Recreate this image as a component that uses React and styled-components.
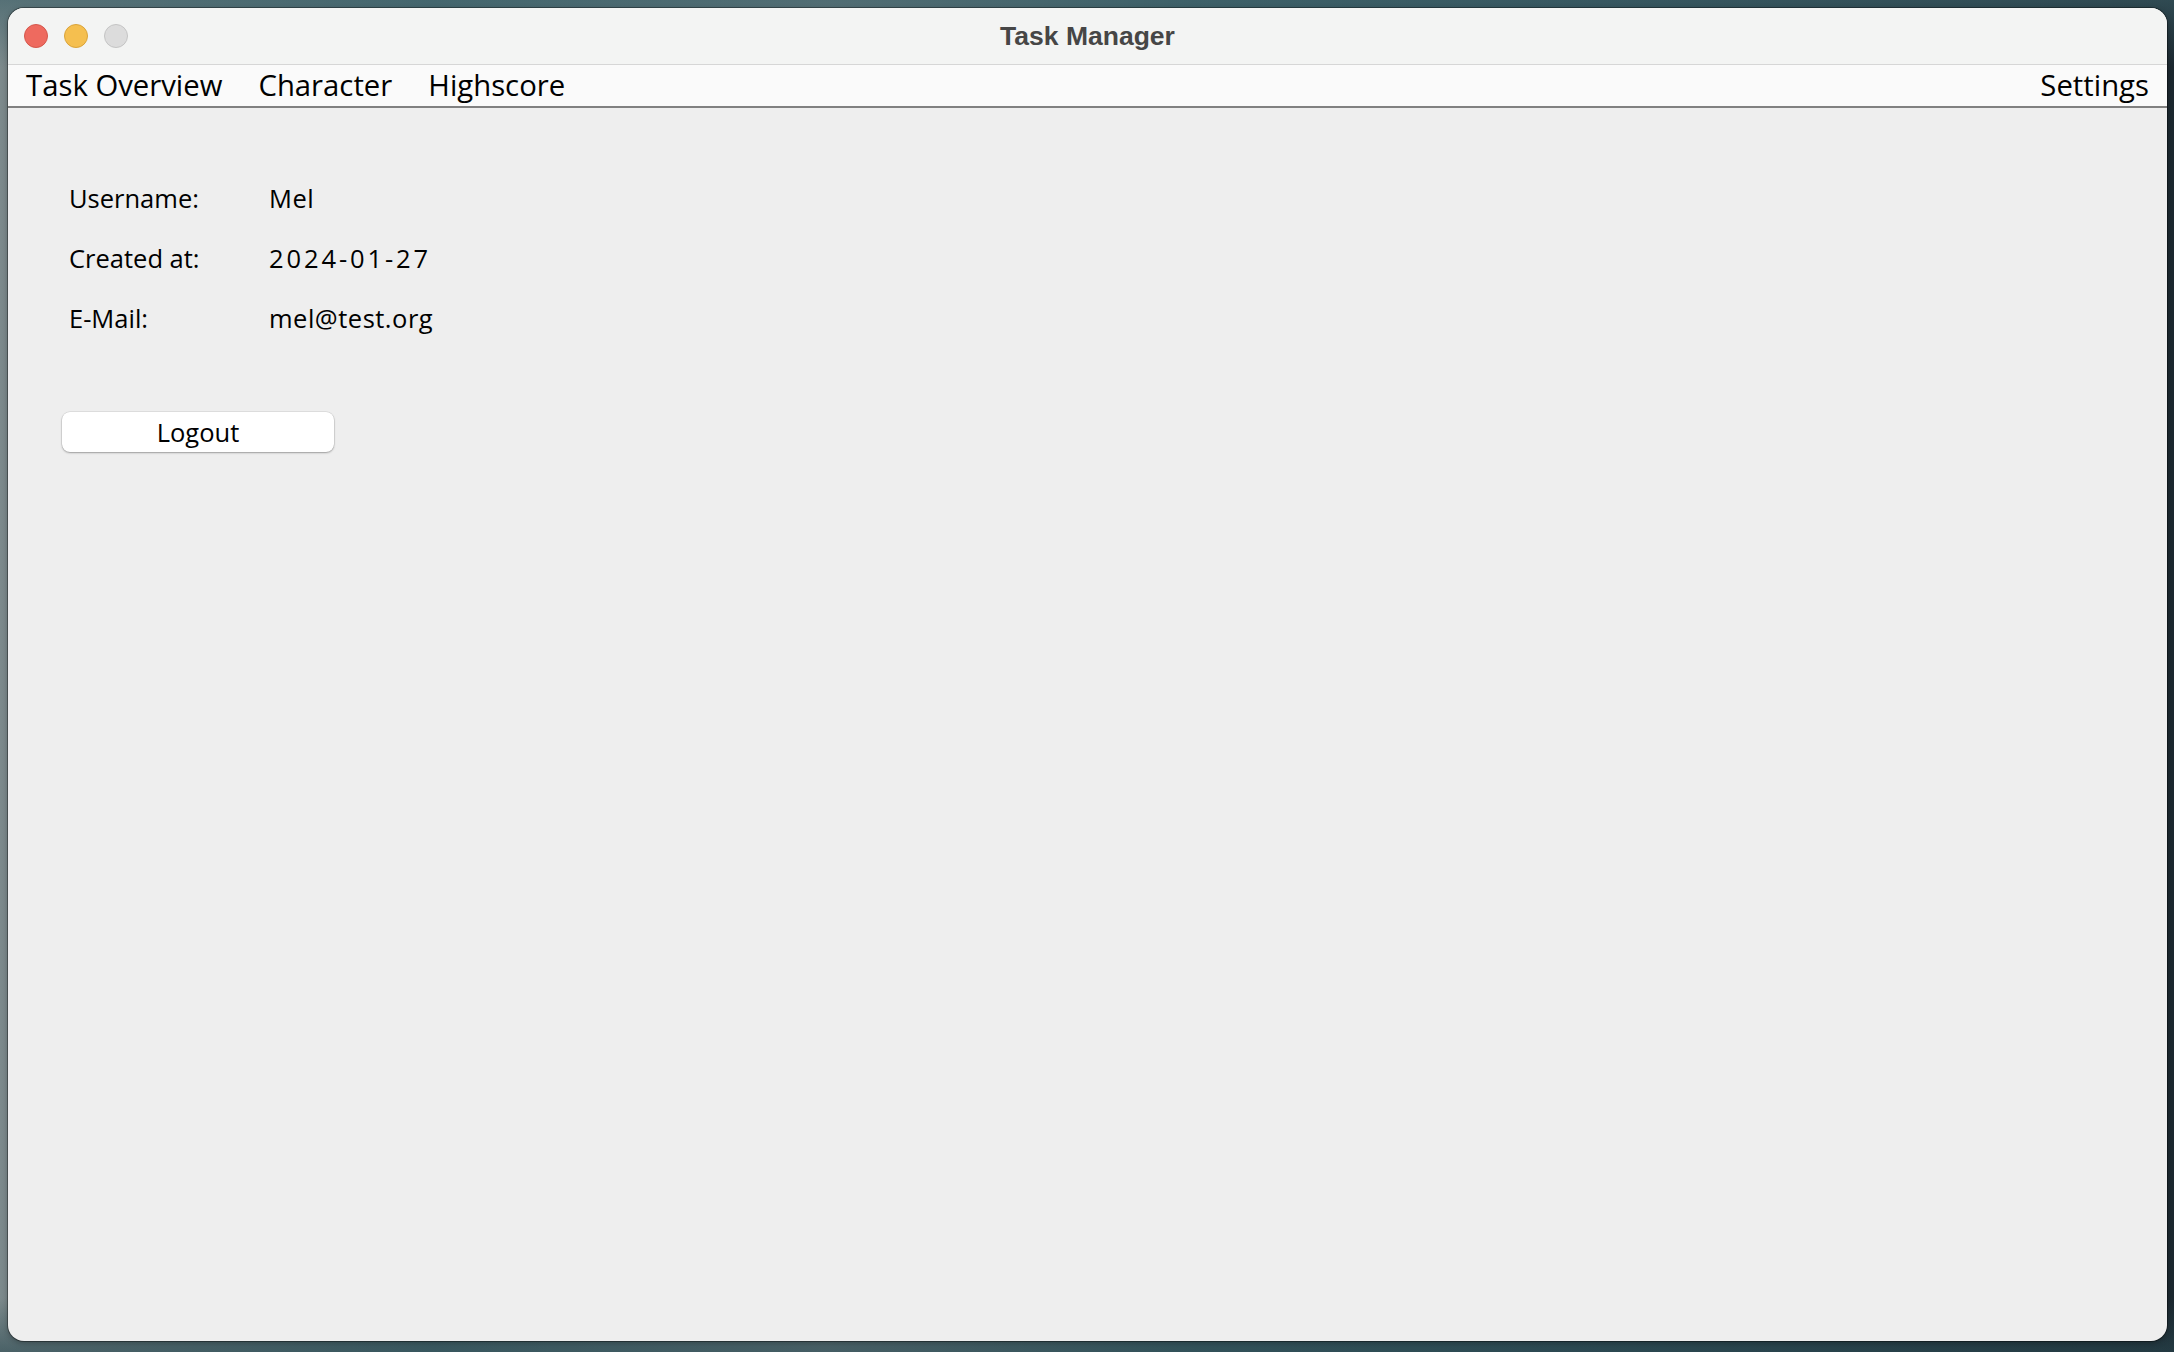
import React from "react";
import styled, { createGlobalStyle } from "styled-components";

const GlobalStyle = createGlobalStyle`
	html, body {
		margin: 0;
		padding: 0;
	}
	body {
		font-family: "Open Sans", "DejaVu Sans", sans-serif;
		color: #000;
	}
`;

const profile = [
	{ label: "Username:", value: "Mel" },
	{ label: "Created at:", value: "2024-01-27", wide: true },
	{ label: "E-Mail:", value: "mel@test.org" },
];

const menus = ["Task Overview", "Character", "Highscore"];

const App = () => {
	return (
		<Desktop>
			<GlobalStyle />
			<Window>
				<TitleBar>
					<Lights>
						<Light color="#ee6a5f" border="#d4574c" />
						<Light color="#f5bf4f" border="#d9a33a" />
						<Light color="#dcdcdc" border="#c4c4c4" />
					</Lights>
					<Title>Task Manager</Title>
				</TitleBar>
				<MenuBar>
					{menus.map((m) => (
						<MenuItem key={m}>{m}</MenuItem>
					))}
					<MenuItem $right>Settings</MenuItem>
				</MenuBar>
				<Content>
					<InfoGrid>
						{profile.map((row) => (
							<React.Fragment key={row.label}>
								<InfoLabel>{row.label}</InfoLabel>
								<InfoValue $wide={row.wide}>{row.value}</InfoValue>
							</React.Fragment>
						))}
					</InfoGrid>
					<LogoutButton type="button">Logout</LogoutButton>
				</Content>
			</Window>
		</Desktop>
	);
};

const Desktop = styled.div`
	box-sizing: border-box;
	width: 2174px;
	height: 1352px;
	padding: 8px 7px 11px 8px;
	background:
		linear-gradient(180deg, rgba(60, 96, 104, 0.6) 0%, rgba(0, 0, 0, 0) 5%),
		linear-gradient(0deg, rgba(40, 70, 78, 0.6) 0%, rgba(0, 0, 0, 0) 4%),
		linear-gradient(90deg, #7d8a8c 0%, #4f6f76 20%, #6f8084 38%, #3f6169 55%, #2f4a54 75%, #1c2830 100%);
	overflow: hidden;
`;

const Window = styled.div`
	display: flex;
	flex-direction: column;
	height: 100%;
	border-radius: 16px;
	overflow: hidden;
	background: #eeeeee;
	box-shadow: 0 0 0 1px rgba(0, 0, 0, 0.35), 0 2px 6px rgba(0, 0, 0, 0.3);
`;

const TitleBar = styled.div`
	position: relative;
	display: flex;
	align-items: center;
	justify-content: center;
	height: 56px;
	flex-shrink: 0;
	background: #f3f4f3;
	border-bottom: 1px solid #d6d6d6;
`;

const Lights = styled.div`
	position: absolute;
	left: 16px;
	top: 0;
	bottom: 0;
	display: flex;
	align-items: center;
	gap: 16px;
`;

const Light = styled.span`
	display: block;
	box-sizing: border-box;
	width: 24px;
	height: 24px;
	border-radius: 50%;
	background: ${(p) => p.color};
	border: 1px solid ${(p) => p.border};
`;

const Title = styled.div`
	font-family: "Liberation Sans", Arial, sans-serif;
	font-weight: 700;
	font-size: 26.5px;
	color: #464646;
`;

const MenuBar = styled.div`
	display: flex;
	align-items: center;
	gap: 36px;
	height: 41px;
	flex-shrink: 0;
	padding: 0 18px 0 18px;
	background: #fafafa;
	border-bottom: 2px solid #808080;
`;

const MenuItem = styled.div`
	font-size: 29.3px;
	line-height: 41px;
	margin-left: ${(p) => (p.$right ? "auto" : "0")};
	color: #000;
	cursor: default;
`;

const Content = styled.div`
	flex: 1;
	display: flex;
	flex-direction: column;
	align-items: flex-start;
	padding: 60px 0 0 54px;
`;

const InfoGrid = styled.div`
	display: grid;
	grid-template-columns: 200px auto;
	margin-left: 7px;
	font-size: 25.5px;
	line-height: 60px;
`;

const InfoLabel = styled.div`
	color: #000;
`;

const InfoValue = styled.div`
	color: #000;
	letter-spacing: ${(p) => (p.$wide ? "2.9px" : "0.5px")};
`;

const LogoutButton = styled.button`
	margin-top: 64px;
	width: 272px;
	height: 40px;
	padding: 0;
	border: none;
	border-radius: 8px;
	background: #ffffff;
	box-shadow: 0 0 0 0.5px rgba(0, 0, 0, 0.12), 0 1px 2px rgba(0, 0, 0, 0.3);
	font-family: "Open Sans", "DejaVu Sans", sans-serif;
	font-size: 25.5px;
	line-height: 40px;
	color: #000;
`;

export default App;
